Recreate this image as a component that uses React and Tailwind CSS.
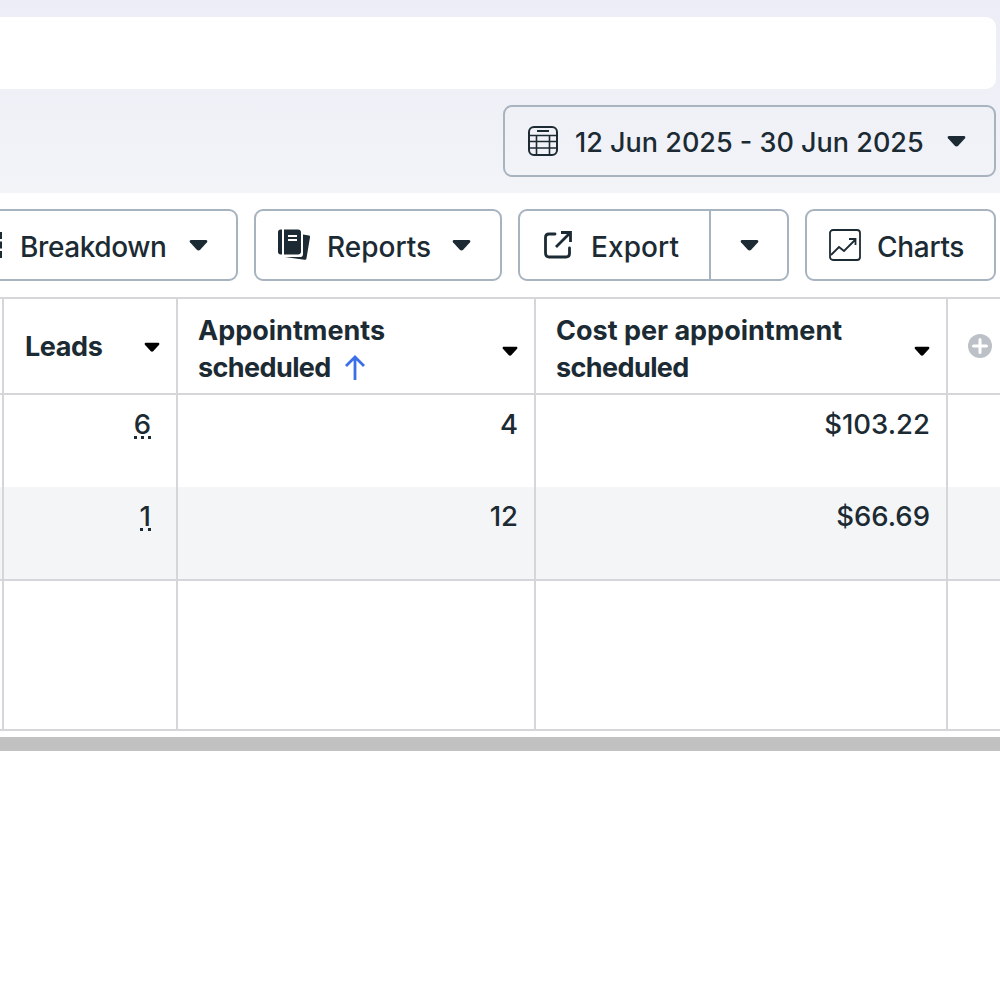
import React from 'react';

const Caret = ({ className = 'w-[19px] h-[12px] fill-[#1c2b33]' }) => (
  <svg viewBox="0 0 19 12" className={`${className} shrink-0`}>
    <path d="M2 1h15c1.200 0 1.800 1.300 1 2.200l-6.800 7.600c-.9 1-2.500 1-3.400 0L1 3.200C.2 2.300.8 1 2 1z" />
  </svg>
);

const CalendarIcon = () => (
  <svg viewBox="0 0 30 30" className="w-[30px] h-[30px] shrink-0" fill="none" stroke="#1c2b33" strokeWidth="2">
    <rect x="1" y="1" width="28" height="28" rx="5" />
    <path d="M1 9.500h28M1 15.500h28M1 22h28M8.500 9.500V29M21.500 9.500V29" strokeWidth="1.600" />
    <path d="M9 5h12" />
  </svg>
);

const BreakdownIcon = () => (
  <svg viewBox="0 0 32 26" className="w-[32px] h-[26px] shrink-0" fill="#1c2b33">
    <path d="M29 0h3v7h-3zM29 9.500h3v7h-3zM29 19h3v7h-3z" />
  </svg>
);

const ReportsIcon = () => (
  <svg viewBox="0 0 32 32" className="w-[32px] h-[32px] shrink-0">
    <path d="M2.500 0.500h1.500v25h-1.500C1.200 25.500 0 24.300 0 23V3C0 1.700 1.200 .5 2.500 .5z" fill="#1c2b33" />
    <path d="M6 0.500h14c1.900 0 3 1.100 3 3V22.500c0 1.900-1.100 3-3 3H6z" fill="#1c2b33" />
    <path d="M10 7h9M10 11h9" stroke="#fff" strokeWidth="2" />
    <path d="M25 5.500l6 1c.8.2 1.200.8 1 1.700l-3.500 21c-.2 1.200-1.100 1.800-2.200 1.600L7 28h15.500c2 0 2.500-1.500 2.500-3z" fill="#1c2b33" />
  </svg>
);

const ExportIcon = () => (
  <svg viewBox="0 0 28 28" className="w-[28px] h-[28px] shrink-0" fill="none" stroke="#1c2b33" strokeWidth="2.800">
    <path d="M11 3H5C2.800 3 1.500 4.300 1.500 6.500v15C1.500 24.700 2.800 26 5 26h17c2 0 3.500-1.300 3.500-3.500V17" strokeLinecap="round" />
    <path d="M12 16L26 2M17 1.500h9.500V11" />
  </svg>
);

const ChartsIcon = () => (
  <svg viewBox="0 0 32 32" className="w-[32px] h-[32px] shrink-0" fill="none" stroke="#1c2b33" strokeWidth="1.800">
    <rect x="1" y="1" width="30" height="30" rx="3" />
    <path d="M2 26l8-8 5 4 11-11M20 10h6.500v6" />
  </svg>
);

const ToolButton = ({ children, className = '' }) => (
  <div className={`h-[72px] shrink-0 flex items-center border-2 border-[#a8b3c0] rounded-[9px] bg-white ${className}`}>
    {children}
  </div>
);

const Cell = ({ children, className = '' }) => (
  <div className={`border-r-2 border-[#d4d6d9] ${className}`}>{children}</div>
);

const Dotted = ({ children }) => (
  <span className="border-b-[3px] border-dotted border-[#1c2b33] leading-[24px] inline-block">{children}</span>
);

export default function App() {
  return (
    <div className="w-[1000px] h-[1000px] overflow-hidden bg-white text-[#1c2b33] font-['Inter','Liberation_Sans',sans-serif] text-[28px] font-[450]">
      {/* Top band */}
      <div className="h-[193px] pt-[17px] pr-1 bg-linear-to-b from-[#ecedf6] to-[#f2f4f8] flex flex-col items-end">
        <div className="w-full h-[72px] bg-white rounded-r-[10px]" />
        <div className="mt-4 w-[493px] h-[72px] flex items-center pl-[23px] pr-[28px] border-2 border-[#a8b3c0] rounded-[9px]">
          <CalendarIcon />
          <span className="ml-[17px] mt-[4px] text-[27px] font-medium">12 Jun 2025 - 30 Jun 2025</span>
          <div className="ml-auto"><Caret /></div>
        </div>
      </div>

      {/* Toolbar */}
      <div className="h-[104px] pt-4 pr-1 flex justify-end gap-4">
        <ToolButton className="w-[300px] pl-[30px] pr-[28px]">
          <BreakdownIcon />
          <span className="ml-[18px] mt-[4px] tracking-[-0.4px]">Breakdown</span>
          <div className="ml-auto"><Caret /></div>
        </ToolButton>
        <ToolButton className="w-[248px] pl-[22px] pr-[29px]">
          <ReportsIcon />
          <span className="ml-[17px] mt-[4px]">Reports</span>
          <div className="ml-auto"><Caret /></div>
        </ToolButton>
        <ToolButton className="w-[271px]">
          <div className="w-[191px] h-full flex items-center pl-[24px] border-r-2 border-[#a8b3c0]">
            <ExportIcon />
            <span className="ml-[19px] mt-[4px] tracking-[0.1px]">Export</span>
          </div>
          <div className="flex-1 flex justify-center"><Caret /></div>
        </ToolButton>
        <ToolButton className="w-[191px] pl-[22px]">
          <ChartsIcon />
          <span className="ml-[16px] mt-[4px] tracking-[-0.3px]">Charts</span>
        </ToolButton>
      </div>

      {/* Table */}
      <div className="grid grid-cols-[4px_174px_358px_412px_52px] grid-rows-[96px_92px_94px_150px] border-t-2 border-[#d4d6d9] text-[27.5px]">
        <Cell className="border-b-2" />
        <Cell className="border-b-2 pl-[21px] pr-4 flex items-center justify-between font-bold text-[27px]">
          <span className="mt-[2px] tracking-[-0.4px]">Leads</span>
          <Caret className="w-[16px] h-[10px] fill-black mt-[2px]" />
        </Cell>
        <Cell className="border-b-2 pl-[20px] pr-4 flex items-center justify-between font-bold leading-[37px] text-[27px]">
          <div className="mt-[6px]">
            Appointments
            <div className="flex items-center gap-[13px]">
              <span className="tracking-[-0.6px]">scheduled</span>
              <svg viewBox="0 0 22 26" className="w-[22px] h-[26px]" fill="none" stroke="#3b6fe8" strokeWidth="2.800">
                <path d="M11 25V2M2 11l9-9 9 9" />
              </svg>
            </div>
          </div>
          <Caret className="w-[16px] h-[10px] fill-black mt-[10px]" />
        </Cell>
        <Cell className="border-b-2 pl-[20px] pr-4 flex items-center justify-between font-bold leading-[37px] text-[27px]">
          <div className="mt-[6px]">
            Cost per appointment
            <br />
            <span className="tracking-[-0.6px]">scheduled</span>
          </div>
          <Caret className="w-[16px] h-[10px] fill-black mt-[10px]" />
        </Cell>
        <div className="border-b-2 border-[#d4d6d9] pl-[20px] flex items-center">
          <svg viewBox="0 0 24 24" className="w-[24px] h-[24px]">
            <circle cx="12" cy="12" r="12" fill="#bcc0c7" />
            <path d="M12 5.500v13M5.500 12h13" stroke="#fff" strokeWidth="3" strokeLinecap="round" />
          </svg>
        </div>

        <Cell />
        <Cell className="pt-[9px] pr-[25px] text-right"><Dotted>6</Dotted></Cell>
        <Cell className="pt-[13px] pr-4 text-right leading-[32px]">4</Cell>
        <Cell className="pt-[13px] pr-4 text-right leading-[32px]">$103.22</Cell>
        <div />

        <Cell className="bg-[#f4f5f7] border-b-2" />
        <Cell className="bg-[#f4f5f7] border-b-2 pt-[9px] pr-[25px] text-right"><Dotted>1</Dotted></Cell>
        <Cell className="bg-[#f4f5f7] border-b-2 pt-[13px] pr-4 text-right leading-[32px]">12</Cell>
        <Cell className="bg-[#f4f5f7] border-b-2 pt-[13px] pr-4 text-right leading-[32px]">$66.69</Cell>
        <div className="bg-[#f4f5f7] border-b-2 border-[#d4d6d9]" />

        <Cell className="border-b-2" />
        <Cell className="border-b-2" />
        <Cell className="border-b-2" />
        <Cell className="border-b-2" />
        <div className="border-b-2 border-[#d4d6d9]" />
      </div>

      {/* Scrollbar */}
      <div className="mt-[6px] h-[14px] bg-[#c1c1c1]" />
    </div>
  );
}
